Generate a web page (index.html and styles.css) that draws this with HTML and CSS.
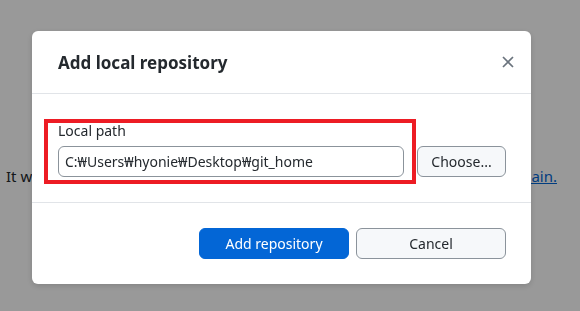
FILE: index.html
```html
<!DOCTYPE html>
<html lang="en">
<head>
    <meta charset="UTF-8">
    <title>Add local repository</title>
    <link rel="stylesheet" href="styles.css">
</head>
<body>

    <div class="page">
        <p class="notice">
            <span>It was</span>
            <a href="#">again.</a>
        </p>
    </div>

    <div class="overlay">
        <div class="dialog">
            <div class="dialog-header">
                <h1>Add local repository</h1>
                <button class="close" aria-label="Close">
                    <svg width="12" height="12" viewBox="0 0 12 12">
                        <path d="M1 1 L11 11 M11 1 L1 11" stroke="#6a737d" stroke-width="1.7" fill="none"/>
                    </svg>
                </button>
            </div>

            <div class="dialog-content">
                <div class="field">
                    <label for="localPath">Local path</label>
                    <div class="path-row">
                        <input id="localPath" type="text" value="C:₩Users₩hyonie₩Desktop₩git_home">
                    </div>
                    <span class="marker"></span>
                </div>
                <button class="btn choose">Choose...</button>
            </div>

            <div class="dialog-footer">
                <button class="btn primary">Add repository</button>
                <button class="btn">Cancel</button>
            </div>
        </div>
    </div>

</body>
</html>
```

FILE: styles.css
```css
body {
    margin: 0;
    font-family: "Noto Sans", "Noto Sans CJK KR", sans-serif;
    color: #24292e;
    background-color: #fff;
}

.page {
    height: 311px;
    overflow: hidden;
}

.notice {
    margin: 0;
    padding: 166px 23px 0 6px;
    display: flex;
    justify-content: space-between;
    font-size: 15px;
    line-height: 20px;
    white-space: nowrap;
}

.notice a {
    color: #0366d6;
}

/* modal layer */
.overlay {
    position: fixed;
    inset: 0;
    background-color: rgba(0, 0, 0, 0.4);
}

.dialog {
    position: absolute;
    left: 32px;
    top: 31px;
    width: 499px;
    background-color: #fff;
    border-radius: 6px;
    box-shadow: 0 2px 6px rgba(0,0,0,0.15);
}

.dialog-header {
    height: 62px;
    display: flex;
    align-items: center;
    justify-content: space-between;
    padding: 0 15px 0 26px;
    border-bottom: 1px solid #e1e4e8;
}

.dialog-header h1 {
    margin: 0;
    font-size: 17px;
    font-weight: 700;
}

.close {
    border: none;
    background: none;
    padding: 2px;
    display: flex;
    cursor: pointer;
}

.dialog-content {
    display: flex;
    align-items: flex-end;
    gap: 13px;
    padding: 27px 25px 25px 26px;
}

.field {
    position: relative;
    flex: 1;
}

.field label {
    display: block;
    font-size: 14px;
    line-height: 20px;
    margin-bottom: 5px;
}

.path-row input {
    box-sizing: border-box;
    width: 100%;
    height: 31px;
    padding: 0 6px;
    border: 1px solid #8b939b;
    border-radius: 6px;
    font-family: inherit;
    font-size: 14px;
    color: #24292e;
}

/* red annotation frame */
.marker {
    position: absolute;
    left: -14px;
    top: -2px;
    right: -12px;
    bottom: -7px;
    border: 4px solid #ed1c24;
    pointer-events: none;
}

.btn {
    box-sizing: border-box;
    height: 31px;
    border: 1px solid #8b939b;
    border-radius: 6px;
    background-color: #f6f8fa;
    font-family: inherit;
    font-size: 14px;
    color: #24292e;
    cursor: pointer;
}

.choose {
    width: 89px;
}

.dialog-footer {
    display: flex;
    justify-content: flex-end;
    gap: 7px;
    padding: 25px 25px 25px 0;
    border-top: 1px solid #e1e4e8;
}

.dialog-footer .btn {
    width: 150px;
}

.btn.primary {
    background-color: #0366d6;
    border-color: #0366d6;
    color: #fff;
}
```
